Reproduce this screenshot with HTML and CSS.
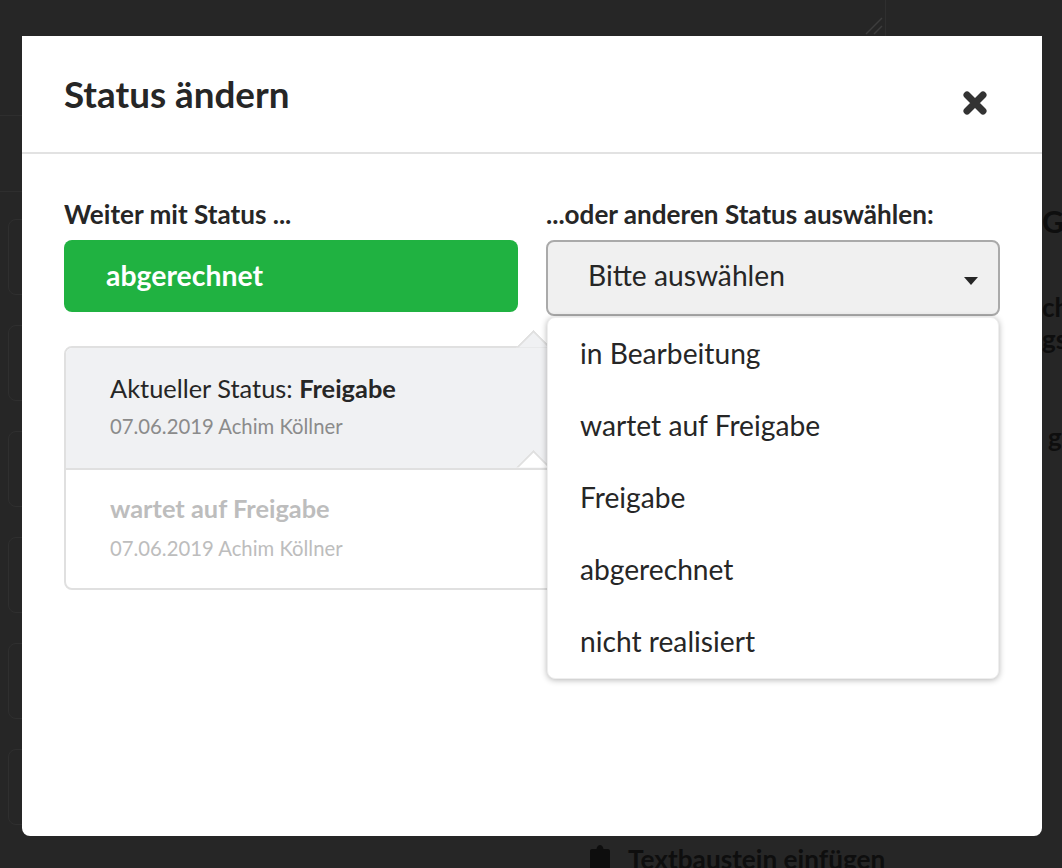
FILE: index.html
```html
<!DOCTYPE html>
<html lang="de">
<head>
    <meta charset="UTF-8">
    <meta name="viewport" content="width=device-width, initial-scale=1.0">
    <title>Status ändern</title>
    <link rel="stylesheet" href="styles.css">
</head>
<body>
    <!-- page behind the dimmed backdrop -->
    <div class="page">
        <div class="page-main">
            <div class="editor">
                <svg class="grip" width="20" height="20" viewBox="0 0 20 20" aria-hidden="true">
                    <path d="M1 18L17 2M9 18L17 10" stroke="#3d3d3d" stroke-width="1.5" fill="none"/>
                </svg>
            </div>
            <div class="page-rule page-rule-first"></div>
            <div class="page-rule"></div>
            <div class="cards">
                <div class="card"></div>
                <div class="card"></div>
                <div class="card"></div>
                <div class="card"></div>
                <div class="card"></div>
                <div class="card"></div>
            </div>
            <div class="snippet-link">
                <svg width="20" height="24" viewBox="0 0 20 24" aria-hidden="true">
                    <path d="M2 4H6.500C7 1.500 8.500 0 10 0S13 1.500 13.500 4H18C19.100 4 20 4.900 20 6V24H0V6C0 4.900.9 4 2 4Z" fill="#0e0e0e"/>
                </svg>
                <span>Textbaustein einfügen</span>
            </div>
        </div>
        <div class="page-side">
            <div class="side-heading">G</div>
            <div class="side-line">ch</div>
            <div class="side-line">gs</div>
            <div class="side-line side-line-last">g</div>
        </div>
    </div>

    <div class="overlay">
        <div class="modal">
            <div class="modal-header">
                <h1>Status ändern</h1>
                <button type="button" class="close" aria-label="Schließen">
                    <svg width="26" height="26" viewBox="0 0 26 26" aria-hidden="true">
                        <path d="M5 5L21 21M21 5L5 21" stroke="#333" stroke-width="7" stroke-linecap="round" fill="none"/>
                    </svg>
                </button>
            </div>
            <div class="modal-body">
                <div class="col">
                    <label class="field-label">Weiter mit Status ...</label>
                    <button type="button" class="next-button">abgerechnet</button>
                    <div class="timeline">
                        <div class="step step-current">
                            <div class="step-title">Aktueller Status: <b>Freigabe</b></div>
                            <div class="step-meta">07.06.2019 Achim Köllner</div>
                        </div>
                        <div class="step step-past">
                            <div class="step-title"><b>wartet auf Freigabe</b></div>
                            <div class="step-meta">07.06.2019 Achim Köllner</div>
                        </div>
                    </div>
                </div>
                <div class="col">
                    <label class="field-label">...oder anderen Status auswählen:</label>
                    <div class="select">
                        <div class="select-box">
                            <span>Bitte auswählen</span>
                            <span class="caret"></span>
                        </div>
                        <ul class="select-menu">
                            <li>in Bearbeitung</li>
                            <li>wartet auf Freigabe</li>
                            <li>Freigabe</li>
                            <li>abgerechnet</li>
                            <li>nicht realisiert</li>
                        </ul>
                    </div>
                </div>
            </div>
        </div>
    </div>
</body>
</html>
```

FILE: styles.css
```css
* {
    box-sizing: border-box;
}
html, body {
    height: 100%;
}
body {
    margin: 0;
    background-color: #262626;
    font-family: "Lato", "Open Sans", sans-serif;
    color: #262626;
    overflow: hidden;
}

/* dimmed page */
.page {
    display: flex;
    height: 868px;
    overflow: hidden;
    color: #0e0e0e;
    font-weight: 700;
}
.page-main {
    width: 886px;
    display: flex;
    flex-direction: column;
    flex-shrink: 0;
}
.editor {
    height: 36px;
    display: flex;
    justify-content: flex-end;
    align-items: flex-end;
    border-right: 1px solid #2f2f2f;
    flex-shrink: 0;
}
.page-rule {
    height: 76px;
    border-bottom: 1px solid #2e2e2e;
    flex-shrink: 0;
}
.page-rule-first {
    height: 80px;
}
.cards {
    display: flex;
    flex-direction: column;
    gap: 30px;
    padding: 27px 0 0 8px;
    flex-shrink: 0;
}
.card {
    height: 76px;
    border: 1px solid #2f2f2f;
    border-radius: 8px;
}
.snippet-link {
    display: flex;
    align-items: flex-start;
    gap: 18px;
    margin-top: 20px;
    padding-left: 590px;
    font-size: 26.2px;
    line-height: 28px;
    white-space: nowrap;
}
.page-side {
    padding: 205px 0 0 156px;
    font-size: 26px;
    line-height: 32px;
    white-space: nowrap;
}
.side-heading {
    margin-bottom: 54px;
    font-size: 30px;
}
.side-line-last {
    margin-top: 66px;
    padding-left: 6px;
}

/* modal */
.overlay {
    position: absolute;
    top: 0;
    left: 0;
    width: 100%;
    height: 100%;
    padding: 36px 20px 32px 22px;
}
.modal {
    width: 1020px;
    height: 800px;
    background-color: #fff;
    border-radius: 0 0 8px 8px;
}
.modal-header {
    height: 118px;
    display: flex;
    justify-content: space-between;
    padding: 0 54px 0 42px;
    border-bottom: 2px solid #e2e2e2;
}
.modal-header h1 {
    margin: 36px 0 0;
    font-size: 36.8px;
    line-height: 44px;
    font-weight: 700;
}
.close {
    width: 26px;
    height: 26px;
    margin-top: 54px;
    padding: 0;
    border: none;
    background: none;
    cursor: pointer;
}
.modal-body {
    display: grid;
    grid-template-columns: 454px 454px;
    gap: 28px;
    padding: 43px 42px 0;
}
.field-label {
    display: block;
    margin-bottom: 9px;
    font-size: 26.1px;
    line-height: 34px;
    font-weight: 700;
}
.next-button {
    display: block;
    width: 100%;
    height: 72px;
    padding: 0 42px 2px;
    border: none;
    border-radius: 8px;
    background-color: #20b241;
    color: #fff;
    font-family: inherit;
    font-size: 28.4px;
    font-weight: 700;
    text-align: left;
    cursor: pointer;
}

/* status history */
.timeline {
    width: 510px;
    margin-top: 34px;
    border: 2px solid #e0e0e0;
    border-radius: 8px;
    background-color: #fff;
}
.step {
    position: relative;
    padding: 22px 44px 0;
}
.step-current {
    height: 122px;
    background-color: #f0f1f3;
    border-bottom: 2px solid #e0e0e0;
    border-radius: 6px 6px 0 0;
}
.step-past {
    height: 118px;
    padding-top: 20px;
    color: #bdbdbd;
}
/* notches drawn as half of a rotated square */
.step-current::before,
.step-current::after {
    content: "";
    position: absolute;
    left: 455px;
    width: 23px;
    height: 23px;
    background-color: #f0f1f3;
    border-top: 2px solid #e0e0e0;
    border-left: 2px solid #e0e0e0;
    transform: rotate(45deg);
    clip-path: polygon(0 0, 100% 0, 0 100%);
}
.step-current::before {
    top: -13.5px;
}
.step-current::after {
    bottom: -11.5px;
    background-color: #fff;
}
.step-title {
    font-size: 25.4px;
    line-height: 36px;
}
.step-meta {
    margin-top: 5px;
    font-size: 20.3px;
    line-height: 30px;
    color: #8b8b8b;
}
.step-past .step-meta {
    margin-top: 7px;
    color: #bdbdbd;
}

/* status select */
.select {
    position: relative;
}
.select-box {
    display: flex;
    justify-content: space-between;
    align-items: center;
    height: 76px;
    padding: 0 20px 6px 40px;
    border: 2px solid #aaa;
    border-radius: 8px;
    background-color: #f0f0f0;
    font-size: 28.2px;
}
.caret {
    width: 0;
    height: 0;
    margin-top: 12px;
    border-top: 8px solid #262626;
    border-left: 7px solid transparent;
    border-right: 7px solid transparent;
}
.select-menu {
    position: absolute;
    top: 77px;
    left: 1px;
    right: 1px;
    margin: 0;
    padding: 0;
    list-style: none;
    background-color: #fff;
    border: 1px solid #eee;
    border-radius: 8px;
    box-shadow: 0 1px 6px rgba(0, 0, 0, 0.3);
    font-size: 28.2px;
}
.select-menu li {
    height: 72px;
    line-height: 70px;
    padding-left: 32px;
}
```
